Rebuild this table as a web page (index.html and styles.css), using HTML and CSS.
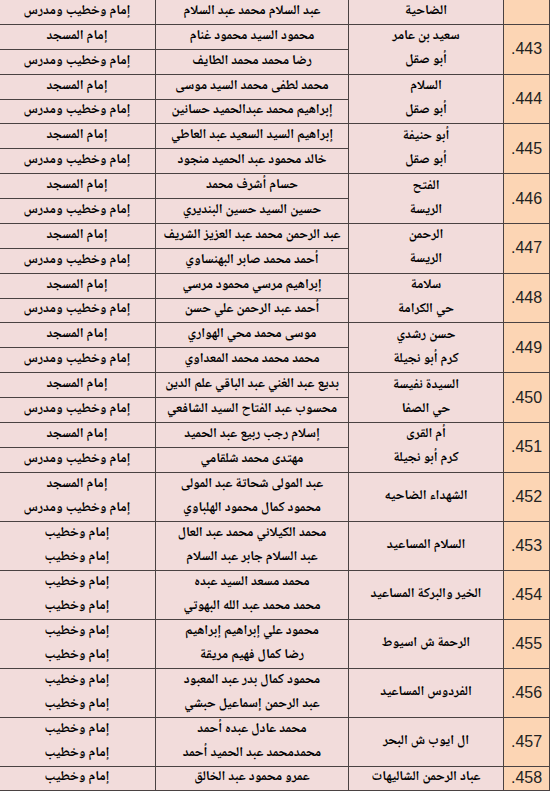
FILE: index.html
```html
<!DOCTYPE html>
<html lang="ar" dir="rtl">
<head>
<meta charset="utf-8">
<title>جدول الأئمة</title>
<link rel="stylesheet" href="styles.css">
</head>
<body>
<table class="grid">
<colgroup>
<col class="c-num"><col class="c-mosque"><col class="c-name"><col class="c-role">
</colgroup>
<tbody>
<tr class="sub"><td class="num"></td><td>الضاحية</td><td>عبد السلام محمد عبد السلام</td><td>إمام وخطيب ومدرس</td></tr>

<tr class="sub"><td class="num" rowspan="2">443.</td><td class="mosque" rowspan="2"><div>سعيد بن عامر</div><div>أبو صقل</div></td><td>محمود السيد محمود غنام</td><td>إمام المسجد</td></tr>
<tr class="sub"><td>رضا محمد محمد الطايف</td><td>إمام وخطيب ومدرس</td></tr>

<tr class="sub"><td class="num" rowspan="2">444.</td><td class="mosque" rowspan="2"><div>السلام</div><div>أبو صقل</div></td><td>محمد لطفى محمد السيد موسى</td><td>إمام المسجد</td></tr>
<tr class="sub"><td>إبراهيم محمد عبدالحميد حسانين</td><td>إمام وخطيب ومدرس</td></tr>

<tr class="sub"><td class="num" rowspan="2">445.</td><td class="mosque" rowspan="2"><div>أبو حنيفة</div><div>أبو صقل</div></td><td>إبراهيم السيد السعيد عبد العاطي</td><td>إمام المسجد</td></tr>
<tr class="sub"><td>خالد محمود عبد الحميد منجود</td><td>إمام وخطيب ومدرس</td></tr>

<tr class="sub"><td class="num" rowspan="2">446.</td><td class="mosque" rowspan="2"><div>الفتح</div><div>الريسة</div></td><td>حسام أشرف محمد</td><td>إمام المسجد</td></tr>
<tr class="sub"><td>حسين السيد حسين البنديري</td><td>إمام وخطيب ومدرس</td></tr>

<tr class="sub"><td class="num" rowspan="2">447.</td><td class="mosque" rowspan="2"><div>الرحمن</div><div>الريسة</div></td><td>عبد الرحمن محمد عبد العزيز الشريف</td><td>إمام المسجد</td></tr>
<tr class="sub"><td>أحمد محمد صابر البهنساوي</td><td>إمام وخطيب ومدرس</td></tr>

<tr class="sub"><td class="num" rowspan="2">448.</td><td class="mosque" rowspan="2"><div>سلامة</div><div>حي الكرامة</div></td><td>إبراهيم مرسي محمود مرسي</td><td>إمام المسجد</td></tr>
<tr class="sub"><td>أحمد عبد الرحمن علي حسن</td><td>إمام وخطيب ومدرس</td></tr>

<tr class="sub"><td class="num" rowspan="2">449.</td><td class="mosque" rowspan="2"><div>حسن رشدي</div><div>كرم أبو نجيلة</div></td><td>موسى محمد محي الهواري</td><td>إمام المسجد</td></tr>
<tr class="sub"><td>محمد محمد محمد المعداوي</td><td>إمام وخطيب ومدرس</td></tr>

<tr class="sub"><td class="num" rowspan="2">450.</td><td class="mosque" rowspan="2"><div>السيدة نفيسة</div><div>حي الصفا</div></td><td>بديع عبد الغني عبد الباقي علم الدين</td><td>إمام المسجد</td></tr>
<tr class="sub"><td>محسوب عبد الفتاح السيد الشافعي</td><td>إمام وخطيب ومدرس</td></tr>

<tr class="sub"><td class="num" rowspan="2">451.</td><td class="mosque" rowspan="2"><div>أم القرى</div><div>كرم أبو نجيلة</div></td><td>إسلام رجب ربيع عبد الحميد</td><td>إمام المسجد</td></tr>
<tr class="sub"><td>مهتدى محمد شلقامي</td><td>إمام وخطيب ومدرس</td></tr>

<tr class="pair"><td class="num">452.</td><td>الشهداء الضاحيه</td><td class="two"><div>عبد المولى شحاتة عبد المولى</div><div>محمود كمال محمود الهلباوي</div></td><td class="two"><div>إمام المسجد</div><div>إمام وخطيب ومدرس</div></td></tr>
<tr class="pair"><td class="num">453.</td><td>السلام المساعيد</td><td class="two"><div>محمد الكيلاني محمد عبد العال</div><div>عبد السلام جابر عبد السلام</div></td><td class="two"><div>إمام وخطيب</div><div>إمام وخطيب</div></td></tr>
<tr class="pair"><td class="num">454.</td><td>الخير والبركة المساعيد</td><td class="two"><div>محمد مسعد السيد عبده</div><div>محمد محمد عبد الله البهوتي</div></td><td class="two"><div>إمام وخطيب</div><div>إمام وخطيب</div></td></tr>
<tr class="pair"><td class="num">455.</td><td>الرحمة ش اسيوط</td><td class="two"><div>محمود علي إبراهيم إبراهيم</div><div>رضا كمال فهيم مريقة</div></td><td class="two"><div>إمام وخطيب</div><div>إمام وخطيب</div></td></tr>
<tr class="pair"><td class="num">456.</td><td>الفردوس المساعيد</td><td class="two"><div>محمود كمال بدر عبد المعبود</div><div>عبد الرحمن إسماعيل حبشي</div></td><td class="two"><div>إمام وخطيب</div><div>إمام وخطيب</div></td></tr>
<tr class="pair"><td class="num">457.</td><td>ال ايوب ش البحر</td><td class="two"><div>محمد عادل عبده أحمد</div><div>محمدمحمد عبد الحميد أحمد</div></td><td class="two"><div>إمام وخطيب</div><div>إمام وخطيب</div></td></tr>
<tr class="last"><td class="num">458.</td><td>عباد الرحمن الشاليهات</td><td>عمرو محمود عبد الخالق</td><td>إمام وخطيب</td></tr>
</tbody>
</table>
</body>
</html>
```
FILE: styles.css
```css
html, body {
  margin: 0;
  padding: 0;
  background: #ffffff;
}

.grid {
  border-collapse: collapse;
  table-layout: fixed;
  width: 551px;
  margin: -1px 0 0 -2px;
  direction: rtl;
  font-family: "Noto Naskh Arabic", "Noto Sans Arabic", "DejaVu Sans", sans-serif;
  font-weight: bold;
  font-size: 13.5px;
  color: #000;
}

.c-num { width: 46px; }
.c-mosque { width: 155px; }
.c-name { width: 193px; }
.c-role { width: 157px; }

.grid td {
  border: 1px solid #4a4242;
  background: #f2dcdb;
  text-align: center;
  vertical-align: middle;
  padding: 0;
  white-space: nowrap;
  overflow: hidden;
  line-height: 22px;
}

.grid tr.sub { height: 24.875px; }
.grid tr.pair { height: 49px; }
.grid tr.last { height: 24px; }

.grid td.num {
  background: #fcd5b4;
  font-family: "Liberation Sans", Arial, sans-serif;
  font-weight: normal;
  font-size: 16px;
  color: #222;
}

.grid td.mosque div,
.grid td.two div {
  height: 24px;
  line-height: 24px;
}
```
